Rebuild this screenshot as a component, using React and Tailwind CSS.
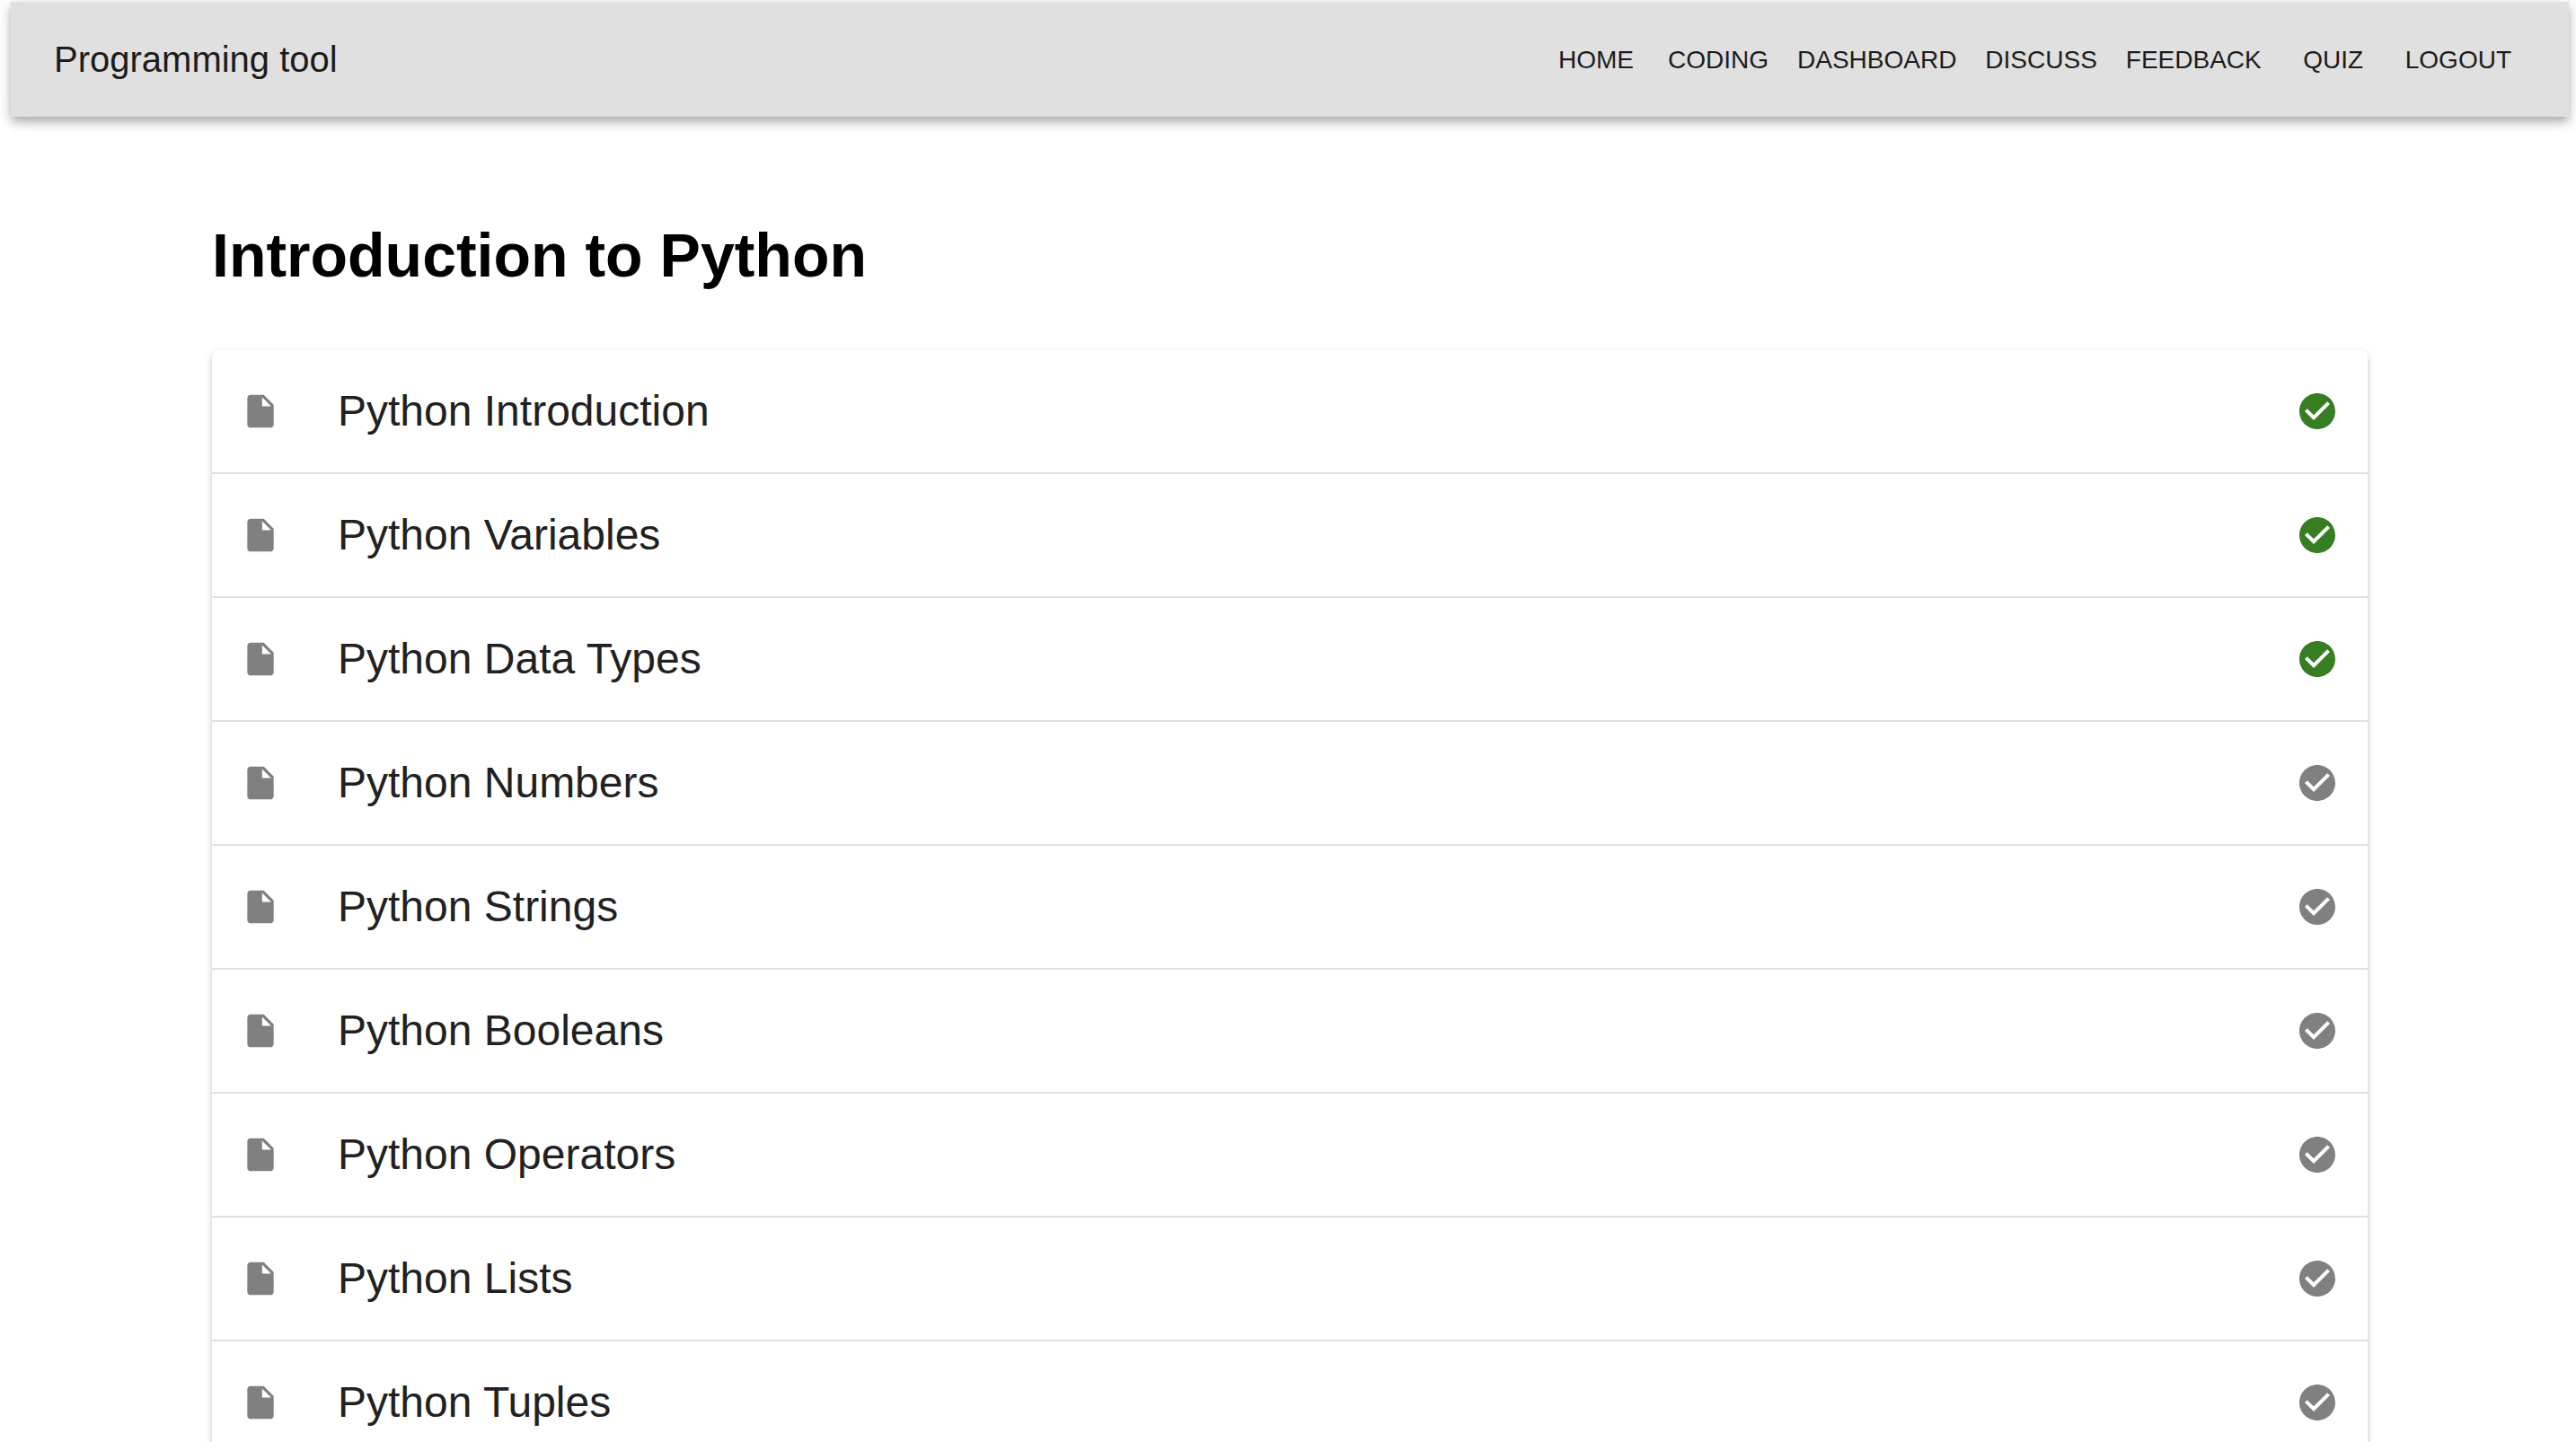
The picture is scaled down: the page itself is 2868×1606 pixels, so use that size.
const navItems = ["Home", "Coding", "Dashboard", "Discuss", "Feedback", "Quiz", "Logout"];

const lessons = [
  { title: "Python Introduction", done: true },
  { title: "Python Variables", done: true },
  { title: "Python Data Types", done: true },
  { title: "Python Numbers", done: false },
  { title: "Python Strings", done: false },
  { title: "Python Booleans", done: false },
  { title: "Python Operators", done: false },
  { title: "Python Lists", done: false },
  { title: "Python Tuples", done: false },
];

function FileIcon() {
  return (
    <svg viewBox="0 0 24 24" fill="currentColor" aria-hidden="true" className="size-11 shrink-0 text-[#808080]">
      <path d="M6 2c-1.1 0-1.99.9-1.99 2L4 20c0 1.1.89 2 1.99 2H18c1.1 0 2-.9 2-2V8l-6-6H6zm7 7V3.5L18.5 9H13z" />
    </svg>
  );
}

function CheckIcon({ done }) {
  return (
    <svg
      viewBox="0 0 24 24"
      fill="currentColor"
      role="img"
      aria-label={done ? "Completed" : "Not completed"}
      className={done ? "size-12 shrink-0 text-[#377e22]" : "size-12 shrink-0 text-[#808080]"}
    >
      <path d="M12 2C6.48 2 2 6.48 2 12s4.480 10 10 10 10-4.480 10-10S17.520 2 12 2zm-2 15l-5-5 1.410-1.410L10 14.170l7.590-7.590L19 8l-9 9z" />
    </svg>
  );
}

export default function App() {
  return (
    <div className="h-screen overflow-hidden bg-white pt-0.5 pr-2 pl-3 font-['Liberation_Sans',Arial,sans-serif]">
      <header className="flex h-32 items-center justify-between bg-[#e0e0e0] px-12 text-[#1c1c1c] shadow-[0_4px_8px_-2px_rgba(0,0,0,0.2),0_8px_10px_0_rgba(0,0,0,0.14),0_2px_20px_0_rgba(0,0,0,0.12)]">
        <div className="text-[40px] leading-16">Programming tool</div>
        <nav className="flex items-center">
          {navItems.map((item) => (
            <button key={item} type="button" className="min-w-32 px-4 pt-3.5 pb-3 text-[28px] leading-12 uppercase">
              {item}
            </button>
          ))}
        </nav>
      </header>
      <main className="mx-auto max-w-[2400px] pt-28">
        <h1 className="text-[68px] leading-21 font-bold text-black">Introduction to Python</h1>
        <ul className="mt-16 rounded-lg bg-white shadow-[0_6px_2px_-4px_rgba(0,0,0,0.2),0_4px_4px_0_rgba(0,0,0,0.14),0_2px_10px_0_rgba(0,0,0,0.12)]">
          {lessons.map(({ title, done }) => (
            <li key={title} className="border-b-2 border-[#e0e0e0]">
              <a href="#" className="flex h-34 items-center px-8 text-[48px] leading-18 text-[#212121]">
                <FileIcon />
                <span className="ml-16 grow">{title}</span>
                <CheckIcon done={done} />
              </a>
            </li>
          ))}
        </ul>
      </main>
    </div>
  );
}
